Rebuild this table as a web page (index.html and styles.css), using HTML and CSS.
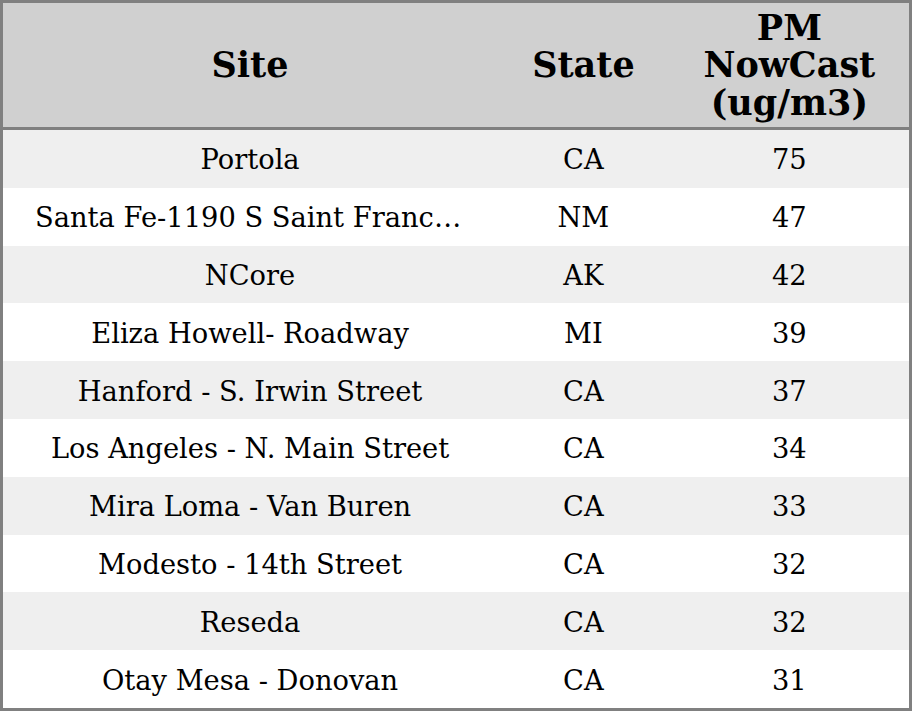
FILE: index.html
```html
<!DOCTYPE html>
<html>
<head>
<meta charset="utf-8">
<link rel="stylesheet" href="styles.css">
</head>
<body>
<table class="aq">
  <colgroup>
    <col class="c-site">
    <col class="c-state">
    <col class="c-pm">
  </colgroup>
  <thead>
    <tr><th>Site</th><th>State</th><th>PM NowCast (ug/m3)</th></tr>
  </thead>
  <tbody>
    <tr><td class="site">Portola</td><td>CA</td><td>75</td></tr>
    <tr><td class="site">Santa Fe-1190 S Saint Francis Dr</td><td>NM</td><td>47</td></tr>
    <tr><td class="site">NCore</td><td>AK</td><td>42</td></tr>
    <tr><td class="site">Eliza Howell- Roadway</td><td>MI</td><td>39</td></tr>
    <tr><td class="site">Hanford - S. Irwin Street</td><td>CA</td><td>37</td></tr>
    <tr><td class="site">Los Angeles - N. Main Street</td><td>CA</td><td>34</td></tr>
    <tr><td class="site">Mira Loma - Van Buren</td><td>CA</td><td>33</td></tr>
    <tr><td class="site">Modesto - 14th Street</td><td>CA</td><td>32</td></tr>
    <tr><td class="site">Reseda</td><td>CA</td><td>32</td></tr>
    <tr><td class="site">Otay Mesa - Donovan</td><td>CA</td><td>31</td></tr>
  </tbody>
</table>
</body>
</html>
```
FILE: styles.css
```css
html, body { margin: 0; padding: 0; background: #fff; }
.aq {
  width: 912px;
  height: 711px;
  border-collapse: collapse;
  table-layout: fixed;
  border: 3px solid #808080;
  font-family: "DejaVu Serif", serif;
  color: #000;
}
.c-site { width: 494px; }
.c-state { width: 172px; }
.c-pm { width: 240px; }
.aq th {
  background: #d0d0d0;
  font-size: 35px;
  font-weight: bold;
  line-height: 37.5px;
  height: 124px;
  padding: 0 30px;
  border-bottom: 3px solid #808080;
  text-align: center;
}
.aq td {
  font-size: 27.3px;
  text-align: center;
  padding: 2px 32px 0;
  height: 55.7px;
  white-space: nowrap;
  overflow: hidden;
  text-overflow: ellipsis;
}
.aq tbody tr:nth-child(odd) td { background: #efefef; }
.aq tbody tr:nth-child(even) td { background: #fff; }
```
